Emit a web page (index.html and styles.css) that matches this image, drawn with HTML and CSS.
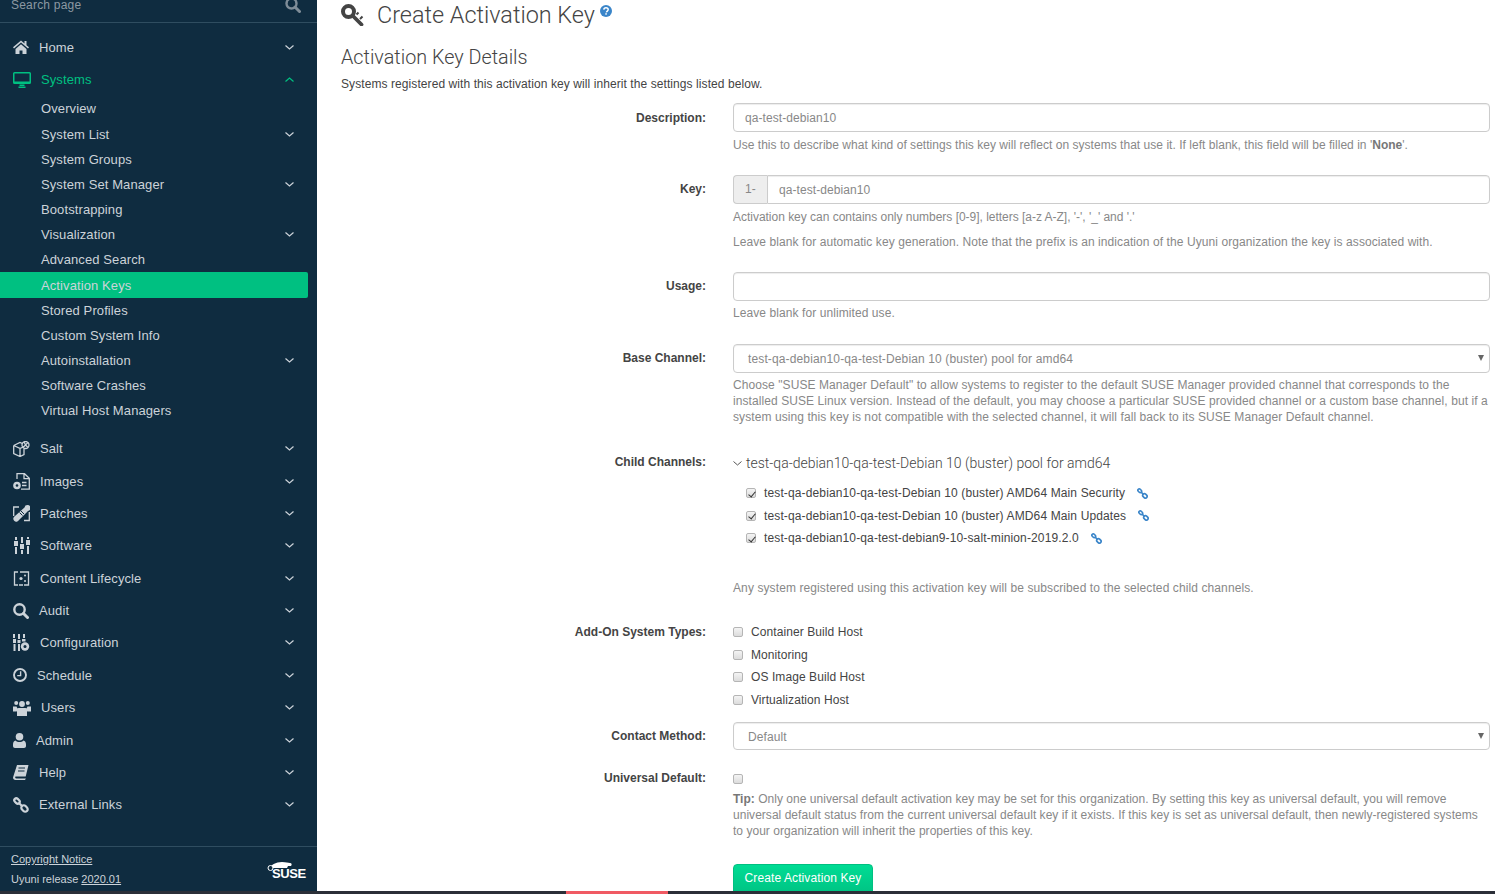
FILE: index.html
```html
<!DOCTYPE html>
<html lang="en">
<head>
<meta charset="utf-8">
<title>Create Activation Key</title>
<link rel="stylesheet" href="styles.css">
</head>
<body>
<div class="app">
<aside class="sidebar">
  <div class="search"><span>Search page</span>
    <svg width="16" height="16" viewBox="0 0 16 16"><circle cx="6.5" cy="5.5" r="5" fill="none" stroke="#7f8d98" stroke-width="2.4"/><path d="M10 9l4.500 4.500" stroke="#7f8d98" stroke-width="3" stroke-linecap="round"/></svg>
  </div>
  <nav class="nav">
    <a class="top"><svg class="ic" width="16" height="14" viewBox="0 0 16 14"><path d="M8 0.500L0 7.300l1 1.100L8 2.600l7 5.800 1-1.100-2.500-2.100V1h-2v2.600zM2.500 9v5h4v-3.500h3V14h4V9L8 4.300z"/></svg><span>Home</span><svg class="chev" width="9" height="5" viewBox="0 0 9 5"><path d="M.5.500l4 3.500 4-3.500"/></svg></a>
    <a class="top on"><svg class="ic" width="18" height="16" viewBox="0 0 18 16"><path d="M1.500 0h15A1.500 1.500 0 0 1 18 1.500v9a1.500 1.500 0 0 1-1.500 1.500h-15A1.500 1.500 0 0 1 0 10.500v-9A1.500 1.500 0 0 1 1.500 0zM1.500 1.500v8h15v-8zM6.500 12.500h5v1.500h-5zM5.500 14.500h7V16h-7z" fill-rule="evenodd"/></svg><span>Systems</span><svg class="chev" width="9" height="5" viewBox="0 0 9 5"><path d="M.5 4.500l4-3.500 4 3.500"/></svg></a>
    <div class="sub">
      <a>Overview</a>
      <a>System List<svg class="chev" width="9" height="5" viewBox="0 0 9 5"><path d="M.5.500l4 3.500 4-3.500"/></svg></a>
      <a>System Groups</a>
      <a>System Set Manager<svg class="chev" width="9" height="5" viewBox="0 0 9 5"><path d="M.5.500l4 3.500 4-3.500"/></svg></a>
      <a>Bootstrapping</a>
      <a>Visualization<svg class="chev" width="9" height="5" viewBox="0 0 9 5"><path d="M.5.500l4 3.500 4-3.500"/></svg></a>
      <a>Advanced Search</a>
      <a class="current">Activation Keys</a>
      <a>Stored Profiles</a>
      <a>Custom System Info</a>
      <a>Autoinstallation<svg class="chev" width="9" height="5" viewBox="0 0 9 5"><path d="M.5.500l4 3.500 4-3.500"/></svg></a>
      <a>Software Crashes</a>
      <a>Virtual Host Managers</a>
    </div>
    <a class="top"><svg class="ic" width="17" height="16" viewBox="0 0 17 16"><g class="ol"><path d="M.7 4.500v8l6.300 3 4-1.800V8M.7 4.500l6.300 3v8M.7 4.500L7 1.500l2 .8M7 7.500l4-1.800"/><circle cx="12.500" cy="4" r="3.500"/><path d="M11 .8l1.500 3.200 2.500-2.500M12.500 4L10 6.500M12.500 4l2.500 2.500"/></g></svg><span>Salt</span><svg class="chev" width="9" height="5" viewBox="0 0 9 5"><path d="M.5.500l4 3.500 4-3.500"/></svg></a>
    <a class="top"><svg class="ic" width="17" height="17" viewBox="0 0 17 17"><g class="ol"><path d="M4 6V.700h7.500l4.800 4.500v11H8M11 .700v5h5M9 9.500h4.500M9 12.500h4.500"/></g><circle cx="4" cy="12.500" r="3.800"/><circle cx="4" cy="12.500" r="1.300" fill="#0f2c40"/></svg><span>Images</span><svg class="chev" width="9" height="5" viewBox="0 0 9 5"><path d="M.5.500l4 3.500 4-3.500"/></svg></a>
    <a class="top"><svg class="ic" width="17" height="17" viewBox="0 0 17 17"><g class="ol"><path d="M6 2H.700v9M11 15.500h5.300V7"/></g><path d="M11.500 2.500a3 3 0 1 1 3.500 3.500L6 15a3 3 0 1 1-4-4z"/><path d="M6.500 7.500l3 3M8 6l3 3" stroke="#0f2c40" stroke-width="1"/></svg><span>Patches</span><svg class="chev" width="9" height="5" viewBox="0 0 9 5"><path d="M.5.500l4 3.500 4-3.500"/></svg></a>
    <a class="top"><svg class="ic" width="17" height="17" viewBox="0 0 17 17"><path d="M2 0h2v3H2zM1 4h4v5H1zM2 10h2v7H2zM8 0h2v6H8zM7 7h4v5H7zM8 13h2v4H8zM14 0h2v2h-2zM13 3h4v5h-4zM14 9h2v8h-2z"/></svg><span>Software</span><svg class="chev" width="9" height="5" viewBox="0 0 9 5"><path d="M.5.500l4 3.500 4-3.500"/></svg></a>
    <a class="top"><svg class="ic" width="17" height="15" viewBox="0 0 17 15"><g class="ol"><path d="M5 1H1.500v13H5M11 14h4.500V1H11"/><path d="M7 1h4M6 14h4"/></g><circle cx="8" cy="7.500" r="1.600"/><circle cx="12" cy="4.500" r="1"/><circle cx="12" cy="10" r="1"/></svg><span>Content Lifecycle</span><svg class="chev" width="9" height="5" viewBox="0 0 9 5"><path d="M.5.500l4 3.500 4-3.500"/></svg></a>
    <a class="top"><svg class="ic" width="16" height="16" viewBox="0 0 16 16"><circle cx="6.500" cy="6.500" r="5.200" fill="none" stroke="#ccd3d9" stroke-width="2.400"/><path d="M10.500 10.500l4 4" stroke="#ccd3d9" stroke-width="3" stroke-linecap="round"/></svg><span>Audit</span><svg class="chev" width="9" height="5" viewBox="0 0 9 5"><path d="M.5.500l4 3.500 4-3.500"/></svg></a>
    <a class="top"><svg class="ic" width="17" height="17" viewBox="0 0 17 17"><path d="M0 0h2v4H0zM0 5h3v4H0zM.5 10h2v7h-2zM5 0h2v5H5zM4.500 6h3v3h-3zM5 10h2v7H5zM10 0h2v4h-2zM9 5h3.500v2.500H9z"/><circle cx="12" cy="12.500" r="4.200"/><circle cx="12" cy="12.500" r="1.500" fill="#0f2c40"/></svg><span>Configuration</span><svg class="chev" width="9" height="5" viewBox="0 0 9 5"><path d="M.5.500l4 3.500 4-3.500"/></svg></a>
    <a class="top"><svg class="ic" width="14" height="14" viewBox="0 0 14 14"><circle cx="7" cy="7" r="6" fill="none" stroke="#ccd3d9" stroke-width="1.900"/><path d="M7.600 3.300v4.300H4.200" fill="none" stroke="#ccd3d9" stroke-width="1.400"/></svg><span>Schedule</span><svg class="chev" width="9" height="5" viewBox="0 0 9 5"><path d="M.5.500l4 3.500 4-3.500"/></svg></a>
    <a class="top"><svg class="ic" width="18" height="16" viewBox="0 0 18 16"><circle cx="3.200" cy="3" r="2"/><circle cx="9" cy="4" r="2.900"/><circle cx="14.800" cy="3" r="2"/><path d="M0 6.500h3.500l1 2-.7 3H0zM14.500 6.500H18v5h-3.800l-.7-3zM5.500 8h7A1.500 1.500 0 0 1 14 9.500V16H4V9.500A1.500 1.500 0 0 1 5.500 8z"/></svg><span>Users</span><svg class="chev" width="9" height="5" viewBox="0 0 9 5"><path d="M.5.500l4 3.500 4-3.500"/></svg></a>
    <a class="top"><svg class="ic" width="13" height="15" viewBox="0 0 13 15"><circle cx="6.500" cy="3.800" r="3.800"/><path d="M2.500 7.500c1 1 2.500 1.500 4 1.500s3-.5 4-1.500c1.500.3 2.500 2 2.500 4v1.500c0 1-.8 2-2 2H2c-1.200 0-2-1-2-2v-1.500c0-2 1-3.700 2.500-4z"/></svg><span>Admin</span><svg class="chev" width="9" height="5" viewBox="0 0 9 5"><path d="M.5.500l4 3.500 4-3.500"/></svg></a>
    <a class="top"><svg class="ic" width="16" height="15" viewBox="0 0 16 15"><path d="M4 0h11.500l-2.800 11.500H3.200c-.9 0-1.200.6-1 1.100.1.500.5.900 1.200.9h9.500L12 15H2.500C1 15 0 13.800 0 12.500z"/><path d="M5.500 3h6.500M5 6h6.500" stroke="#0f2c40" stroke-width="1.200"/></svg><span>Help</span><svg class="chev" width="9" height="5" viewBox="0 0 9 5"><path d="M.5.500l4 3.500 4-3.500"/></svg></a>
    <a class="top"><svg class="ic" width="16" height="16" viewBox="0 0 16 16"><g class="ol thick"><rect x="-3" y="-2" width="6" height="4" rx="2" transform="translate(4 4) rotate(45)"/><rect x="-3.500" y="-2.500" width="7" height="5" rx="2.500" transform="translate(11.500 11.500) rotate(45)"/><path d="M6 6l3.500 3.500"/></g></svg><span>External Links</span><svg class="chev" width="9" height="5" viewBox="0 0 9 5"><path d="M.5.500l4 3.500 4-3.500"/></svg></a>
  </nav>
  <footer class="foot">
    <div class="foot-text">
      <a class="u">Copyright Notice</a>
      <div>Uyuni release <a class="u">2020.01</a></div>
    </div>
    <div class="suse">
      <svg width="26" height="11" viewBox="0 0 26 11"><path d="M3 8C3 4 9 1 15 1c4 0 6 1 8 1 2 0 2 2 1 3h-3l-1 2H5z" fill="#fff"/><circle cx="3.500" cy="7" r="2.500" fill="#0f2c40" stroke="#fff"/></svg>
      <b>SUSE</b>
    </div>
  </footer>
</aside>
<main class="main">
  <h1 class="title">
    <svg class="keyic" width="23" height="22" viewBox="0 0 23 22"><circle cx="7.500" cy="7.500" r="5.500" fill="none" stroke="#444" stroke-width="4"/><path d="M11.500 11.500l9 9" stroke="#444" stroke-width="3.800" stroke-linecap="round"/><path d="M15.500 10.500l2-2M19 15l2.500-2.500" stroke="#444" stroke-width="2"/></svg>
    <span>Create Activation Key</span>
    <svg class="q" width="12" height="12" viewBox="0 0 12 12"><circle cx="6" cy="6" r="6" fill="#3a85c9"/><path d="M3.800 4.600C3.900 3.300 4.800 2.700 6 2.700c1.300 0 2.200.7 2.200 1.800 0 1.600-1.800 1.500-1.700 2.900" fill="none" stroke="#fff" stroke-width="1.500"/><rect x="5.300" y="8.200" width="1.500" height="1.500" fill="#fff"/></svg>
  </h1>
  <h2 class="subtitle">Activation Key Details</h2>
  <p class="lead">Systems registered with this activation key will inherit the settings listed below.</p>

  <div class="row r-desc">
    <label>Description:</label>
    <div>
      <div class="input">qa-test-debian10</div>
      <p class="help narrow">Use this to describe what kind of settings this key will reflect on systems that use it. If left blank, this field will be filled in '<b>None</b>'.</p>
    </div>
  </div>
  <div class="row r-key">
    <label>Key:</label>
    <div>
      <div class="group"><span class="addon">1-</span><div class="input">qa-test-debian10</div></div>
      <p class="help narrower">Activation key can contains only numbers [0-9], letters [a-z A-Z], '-', '_' and '.'</p>
      <p class="help second">Leave blank for automatic key generation. Note that the prefix is an indication of the Uyuni organization the key is associated with.</p>
    </div>
  </div>
  <div class="row r-usage">
    <label>Usage:</label>
    <div>
      <div class="input"></div>
      <p class="help tight">Leave blank for unlimited use.</p>
    </div>
  </div>
  <div class="row r-base">
    <label>Base Channel:</label>
    <div>
      <div class="input select wide">test-qa-debian10-qa-test-Debian 10 (buster) pool for amd64<i class="caret"></i></div>
      <p class="help tight">Choose "SUSE Manager Default" to allow systems to register to the default SUSE Manager provided channel that corresponds to the installed SUSE Linux version. Instead of the default, you may choose a particular SUSE provided channel or a custom base channel, but if a system using this key is not compatible with the selected channel, it will fall back to its SUSE Manager Default channel.</p>
    </div>
  </div>
  <div class="row r-child">
    <label>Child Channels:</label>
    <div>
      <div class="tree-head"><svg class="tchev" width="9" height="5" viewBox="0 0 9 5"><path d="M.5.500l4 3.500 4-3.500"/></svg><span>test-qa-debian10-qa-test-Debian 10 (buster) pool for amd64</span></div>
      <ul class="channels">
        <li><i class="cb checked"></i><span>test-qa-debian10-qa-test-Debian 10 (buster) AMD64 Main Security</span><svg class="lnk" width="11" height="11" viewBox="0 0 16 16"><g><rect x="-3" y="-2" width="6" height="4" rx="2" transform="translate(4 4) rotate(45)"/><rect x="-3.500" y="-2.500" width="7" height="5" rx="2.500" transform="translate(11.500 11.500) rotate(45)"/><path d="M6 6l3.500 3.500"/></g></svg></li>
        <li><i class="cb checked"></i><span>test-qa-debian10-qa-test-Debian 10 (buster) AMD64 Main Updates</span><svg class="lnk" width="11" height="11" viewBox="0 0 16 16"><g><rect x="-3" y="-2" width="6" height="4" rx="2" transform="translate(4 4) rotate(45)"/><rect x="-3.500" y="-2.500" width="7" height="5" rx="2.500" transform="translate(11.500 11.500) rotate(45)"/><path d="M6 6l3.500 3.500"/></g></svg></li>
        <li><i class="cb checked"></i><span>test-qa-debian10-qa-test-debian9-10-salt-minion-2019.2.0</span><svg class="lnk" width="11" height="11" viewBox="0 0 16 16"><g><rect x="-3" y="-2" width="6" height="4" rx="2" transform="translate(4 4) rotate(45)"/><rect x="-3.500" y="-2.500" width="7" height="5" rx="2.500" transform="translate(11.500 11.500) rotate(45)"/><path d="M6 6l3.500 3.500"/></g></svg></li>
      </ul>
      <p class="help any">Any system registered using this activation key will be subscribed to the selected child channels.</p>
    </div>
  </div>
  <div class="row r-addon">
    <label>Add-On System Types:</label>
    <ul class="types">
      <li><i class="cb"></i>Container Build Host</li>
      <li><i class="cb"></i>Monitoring</li>
      <li><i class="cb"></i>OS Image Build Host</li>
      <li><i class="cb"></i>Virtualization Host</li>
    </ul>
  </div>
  <div class="row r-contact">
    <label>Contact Method:</label>
    <div class="input select short">Default<i class="caret"></i></div>
  </div>
  <div class="row r-univ">
    <label>Universal Default:</label>
    <div>
      <i class="cb solo"></i>
      <p class="help narrow"><b>Tip:</b> Only one universal default activation key may be set for this organization. By setting this key as universal default, you will remove universal default status from the current universal default key if it exists. If this key is set as universal default, then newly-registered systems to your organization will inherit the properties of this key.</p>
      <button class="btn">Create Activation Key</button>
    </div>
  </div>
</main>
</div>
<div class="bottombar"><span></span></div>
</body>
</html>
```
FILE: styles.css
```css
* { box-sizing: border-box; }
html, body { margin: 0; height: 100%; overflow: hidden; background: #fff; }
body { font-family: "Liberation Sans", Arial, sans-serif; font-size: 12px; color: #444; }
.app { display: flex; height: 894px; }
ul { list-style: none; margin: 0; padding: 0; }
p { margin: 0; }

.sidebar { width: 317px; flex: none; height: 891px; background: #0f2c40; color: #ccd3d9; display: flex; flex-direction: column; font-size: 13px; letter-spacing: .1px; }
.search { flex: none; border-bottom: 1px solid #2f4d60; display: flex; justify-content: space-between; padding: 0 16px 4px 11px; color: #8c98a2; margin-top: -9px; height: 32px; align-items: center; font-size: 12px; letter-spacing: .2px; }
.search svg { margin-bottom: -2px; }
.nav { flex: 1; padding-top: 8px; }
.nav a { display: flex; align-items: center; position: relative; }
.top { height: 32.380px; padding-left: 13px; }
.top .ic { margin-right: 10px; flex: none; fill: #ccd3d9; }
.top.on { color: #00c081; }
.top.on .ic { fill: #00c081; }
.top.on .chev { stroke: #00c081; }
.ol { fill: none; stroke: #ccd3d9; stroke-width: 1.300; }
.ol.thick { stroke-width: 2.200; }
.chev { fill: none; stroke: #ccd3d9; stroke-width: 1.200; position: absolute; left: 284.500px; top: 50%; margin-top: -2.500px; }
.sub { padding: .500px 0 9px; }
.sub a { height: 25.180px; padding-left: 41px; margin-right: 9px; }
.sub a.current { background: #00c081; border-radius: 0 2px 2px 0; }
.foot { height: 45px; flex: none; border-top: 1px solid #2f4d60; display: flex; justify-content: space-between; padding: 2px 12px 0 11px; font-size: 11px; letter-spacing: 0; }
.u { text-decoration: underline; }
.foot-text { line-height: 20px; }
.suse { position: relative; width: 38px; height: 22px; margin-top: 12px; color: #fff; }
.suse svg { position: absolute; left: 0; top: 0; }
.suse b { position: absolute; left: 5px; top: 6px; font-size: 13px; line-height: 13px; letter-spacing: -.4px; }

.main { flex: 1; padding-left: 24px; padding-right: 5px; letter-spacing: .08px; }
.title { margin: 0; height: 30px; display: flex; align-items: center; font-family: Roboto, sans-serif; font-weight: 300; font-size: 23.400px; color: #444; letter-spacing: 0; }
.keyic { margin-right: 13px; flex: none; }
.q { align-self: flex-start; margin: 5px 0 0 5px; }
.subtitle { margin: 15px 0 0; height: 26px; line-height: 26px; font-family: Roboto, sans-serif; font-weight: 300; font-size: 19.800px; color: #444; letter-spacing: 0; }
.lead { margin-top: 5px; height: 16px; line-height: 16px; }
.row { display: grid; grid-template-columns: 365px 757px; column-gap: 27px; }
.row > label { font-weight: bold; text-align: right; line-height: 16px; padding-top: 6px; letter-spacing: 0; }
.r-desc > label { padding-top: 7px; }
.input { height: 29px; border: 1px solid #ccc; border-radius: 4px; padding: 0 11px; line-height: 28px; color: #888; box-shadow: inset 0 1px 1px rgba(0,0,0,.075); flex: 1; }
.wide { letter-spacing: .13px; }
.help { color: #888; line-height: 16px; margin-top: 5px; }
.help.tight { margin-top: 4px; }
.help.second { margin-top: 9px; }
.help.narrow { letter-spacing: .03px; }
.help.narrower { letter-spacing: -.02px; }
.help.any { letter-spacing: .1px; }
.help b { color: #777; letter-spacing: 0; }
.group { display: flex; }
.addon { width: 34px; height: 29px; line-height: 27px; text-align: center; background: #eee; border: 1px solid #ccc; border-right: 0; border-radius: 4px 0 0 4px; color: #888; }
.group .input { border-radius: 0 4px 4px 0; }
.select { position: relative; padding-left: 14px; }
.caret { position: absolute; right: 5px; top: 10px; border: 3.500px solid transparent; border-top: 6px solid #666; border-bottom: 0; }
.short { height: 28px; line-height: 28px; }
.r-desc { margin-top: 11px; height: 72px; }
.r-key { height: 97px; }
.r-usage { height: 72px; }
.r-base { height: 103px; }
.r-child { height: 171px; }
.r-child > label { padding-top: 7px; }
.tree-head { display: flex; align-items: center; height: 22px; margin-top: 5px; font-family: Roboto, sans-serif; font-weight: 300; font-size: 14px; color: #444; letter-spacing: 0; }
.tchev { fill: none; stroke: #555; stroke-width: 1; margin-right: 4px; }
.channels { padding: 8px 0 0 13px; height: 101px; letter-spacing: .13px; }
.channels li { display: flex; align-items: center; height: 22.500px; color: #444; }
.channels .cb { margin-right: 8px; }
.lnk { margin-left: 12px; fill: none; stroke: #3a85c9; stroke-width: 2.400; }
.cb { display: block; width: 10px; height: 10px; flex: none; border: 1px solid #b5b5b5; border-radius: 2px; background: linear-gradient(#f4f4f4, #dcdcdc); position: relative; }
.cb.checked::after { content: ""; position: absolute; left: 2.500px; top: .500px; width: 3px; height: 6px; border: solid #333; border-width: 0 1.500px 1.500px 0; transform: rotate(40deg); }
.r-addon { height: 104px; }
.types { padding-top: 3px; }
.types li { display: flex; align-items: center; height: 22.600px; color: #444; }
.types .cb { margin-right: 8px; }
.r-contact { height: 42px; }
.solo { margin-top: 10px; }
.r-univ .help { margin-top: 7px; }
.btn { display: block; margin-top: 25px; width: 140px; height: 34px; border: 1px solid #00c081; border-radius: 4px; background: linear-gradient(#00dc94, #00c081); color: #fff; font: 12px "Liberation Sans", Arial, sans-serif; letter-spacing: .1px; padding: 0 0 6px; }

.bottombar { position: fixed; left: 0; right: 0; bottom: 0; height: 3px; background: #2b2f38; }
.bottombar span { position: absolute; left: 566px; top: 0; width: 102px; height: 3px; background: #f05a63; }
```
